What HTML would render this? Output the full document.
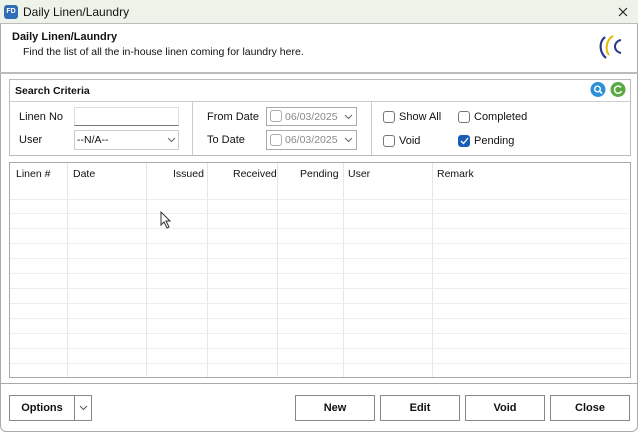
<!DOCTYPE html>
<html><head><meta charset="utf-8"><style>
*{box-sizing:border-box;margin:0;padding:0}
body{width:638px;height:432px;overflow:hidden;background:#fff;font-family:"Liberation Sans",sans-serif;font-size:11px;color:#111;position:relative}
.a{position:absolute}
.t{position:absolute;white-space:nowrap}
.cb{position:absolute;width:12px;height:12px;border:1px solid #777;border-radius:3px;background:#fff}
.btn{position:absolute;border:1px solid #888;background:#fff;text-align:center;font-weight:bold;font-size:11px;line-height:24px;height:26px}
.vl{position:absolute;width:1px;background:#e6e6e6;top:163px;height:214px}
.hl{position:absolute;height:1px;background:#eee;left:10px;width:619px}
.chev{position:absolute}
</style></head><body>
<div class="a" style="left:0;top:0;width:638px;height:24px;background:#eef3ea;border-bottom:1px solid #bbb"></div>
<div class="a" style="left:4px;top:5px;width:14px;height:14px;background:#2f6db5;border-radius:3px;color:#fff;font-size:7px;line-height:14px;text-align:center;font-weight:bold">FD</div>
<div class="t" style="left:23px;top:5px;font-size:12px">Daily Linen/Laundry</div>
<svg class="a" style="left:618px;top:7px" width="10" height="10"><path d="M1 1L9 9M9 1L1 9" stroke="#222" stroke-width="1.2"/></svg>
<div class="a" style="left:0;top:24px;width:638px;height:408px;border:1px solid #aaa;border-top:none;border-radius:0 0 6px 6px"></div>
<div class="t" style="left:12px;top:31px;font-weight:bold">Daily Linen/Laundry</div>
<div class="t" style="left:23px;top:46px;font-size:10.5px">Find the list of all the in-house linen coming for laundry here.</div>
<svg class="a" style="left:597px;top:33px" width="28" height="28" viewBox="0 0 28 28"><path d="M8 4 C2 9 2 19 9 25" stroke="#2a3a8a" stroke-width="2.2" fill="none"/><path d="M16 3 C9 7 8 17 12 22" stroke="#e5b800" stroke-width="2" fill="none"/><path d="M24 7 C17 8 15 18 24 20" stroke="#2a3a8a" stroke-width="2" fill="none"/></svg>
<div class="a" style="left:0;top:72px;width:638px;height:2px;background:#bbb"></div>
<div class="a" style="left:9px;top:79px;width:622px;height:77px;border:1px solid #bbb"></div>
<div class="t" style="left:15px;top:85px;font-weight:bold;font-size:10.5px">Search Criteria</div>
<svg class="a" style="left:590px;top:81px" width="37" height="17"><circle cx="8" cy="8.5" r="7.5" fill="#2d8fd8"/><circle cx="7.5" cy="8" r="2.8" stroke="#fff" stroke-width="1.4" fill="none"/><path d="M9.5 10L12 12.5" stroke="#fff" stroke-width="1.6"/><circle cx="28" cy="8.5" r="7.5" fill="#5aa843"/><path d="M31 6.5A3.6 3.6 0 1 0 31.5 10" stroke="#fff" stroke-width="1.5" fill="none"/></svg>
<div class="a" style="left:10px;top:101px;width:620px;height:1px;background:#ccc"></div>
<div class="a" style="left:192px;top:101px;width:1px;height:54px;background:#ccc"></div>
<div class="a" style="left:371px;top:101px;width:1px;height:54px;background:#ccc"></div>
<div class="t" style="left:19px;top:111px">Linen No</div>
<div class="t" style="left:19px;top:134px">User</div>
<div class="a" style="left:74px;top:107px;width:105px;height:19px;border:1px solid #ddd;border-bottom:1px solid #777"></div>
<div class="a" style="left:74px;top:130px;width:105px;height:20px;border:1px solid #ccc"></div>
<div class="t" style="left:77px;top:134px;font-size:10.5px">--N/A--</div>
<svg class="chev" style="left:167px;top:137px" width="9" height="6"><path d="M1 1L4.5 4.5L8 1" stroke="#666" fill="none"/></svg>
<div class="t" style="left:207px;top:111px">From Date</div>
<div class="t" style="left:207px;top:134px">To Date</div>
<div class="a" style="left:266px;top:107px;width:91px;height:19px;border:1px solid #aaa"></div>
<div class="a" style="left:266px;top:130px;width:91px;height:20px;border:1px solid #aaa"></div>
<div class="cb" style="left:270px;top:110px;border-color:#aaa"></div>
<div class="cb" style="left:270px;top:134px;border-color:#aaa"></div>
<div class="t" style="left:285px;top:111px;color:#888;font-size:10.5px">06/03/2025</div>
<div class="t" style="left:285px;top:134px;color:#888;font-size:10.5px">06/03/2025</div>
<svg class="chev" style="left:344px;top:114px" width="9" height="6"><path d="M1 1L4.5 4.5L8 1" stroke="#666" fill="none"/></svg>
<svg class="chev" style="left:344px;top:137px" width="9" height="6"><path d="M1 1L4.5 4.5L8 1" stroke="#666" fill="none"/></svg>
<div class="cb" style="left:383px;top:111px"></div>
<div class="t" style="left:399px;top:111px">Show All</div>
<div class="cb" style="left:458px;top:111px"></div>
<div class="t" style="left:474px;top:111px">Completed</div>
<div class="cb" style="left:383px;top:135px"></div>
<div class="t" style="left:399px;top:135px">Void</div>
<div class="cb" style="left:458px;top:135px;background:#1a5fb4;border-color:#1a5fb4"></div>
<svg class="a" style="left:460px;top:137px" width="9" height="8"><path d="M1 4L3.5 6.5L8 1" stroke="#fff" stroke-width="1.3" fill="none"/></svg>
<div class="t" style="left:474px;top:135px">Pending</div>
<div class="a" style="left:9px;top:162px;width:622px;height:216px;border:1px solid #aaa"></div>
<div class="vl" style="left:67px"></div><div class="vl" style="left:146px"></div><div class="vl" style="left:207px"></div><div class="vl" style="left:277px"></div><div class="vl" style="left:343px"></div><div class="vl" style="left:432px"></div>
<div class="hl" style="top:199px"></div><div class="hl" style="top:213px"></div><div class="hl" style="top:228px"></div><div class="hl" style="top:243px"></div><div class="hl" style="top:258px"></div><div class="hl" style="top:273px"></div><div class="hl" style="top:288px"></div><div class="hl" style="top:303px"></div><div class="hl" style="top:318px"></div><div class="hl" style="top:333px"></div><div class="hl" style="top:348px"></div><div class="hl" style="top:363px"></div>
<div class="t" style="left:16px;top:168px;font-size:10.5px">Linen #</div>
<div class="t" style="left:73px;top:168px;font-size:10.5px">Date</div>
<div class="t" style="left:173px;top:168px;font-size:10.5px">Issued</div>
<div class="t" style="left:233px;top:168px;font-size:10.5px">Received</div>
<div class="t" style="left:300px;top:168px;font-size:10.5px">Pending</div>
<div class="t" style="left:348px;top:168px;font-size:10.5px">User</div>
<div class="t" style="left:437px;top:168px;font-size:10.5px">Remark</div>
<svg class="a" style="left:160px;top:211px" width="12" height="18"><path d="M1 1 L1 14 L4 11 L7 17 L9 16 L6 10 L10 10 Z" fill="#fff" stroke="#333"/></svg>
<div class="a" style="left:0;top:383px;width:638px;height:1px;background:#aaa"></div>
<div class="btn" style="left:9px;top:395px;width:66px">Options</div>
<div class="btn" style="left:74px;top:395px;width:18px"></div>
<svg class="chev" style="left:79px;top:405px" width="9" height="6"><path d="M1 1L4.5 4.5L8 1" stroke="#555" fill="none"/></svg>
<div class="btn" style="left:295px;top:395px;width:80px">New</div>
<div class="btn" style="left:380px;top:395px;width:80px">Edit</div>
<div class="btn" style="left:465px;top:395px;width:80px">Void</div>
<div class="btn" style="left:550px;top:395px;width:80px">Close</div>
</body></html>
